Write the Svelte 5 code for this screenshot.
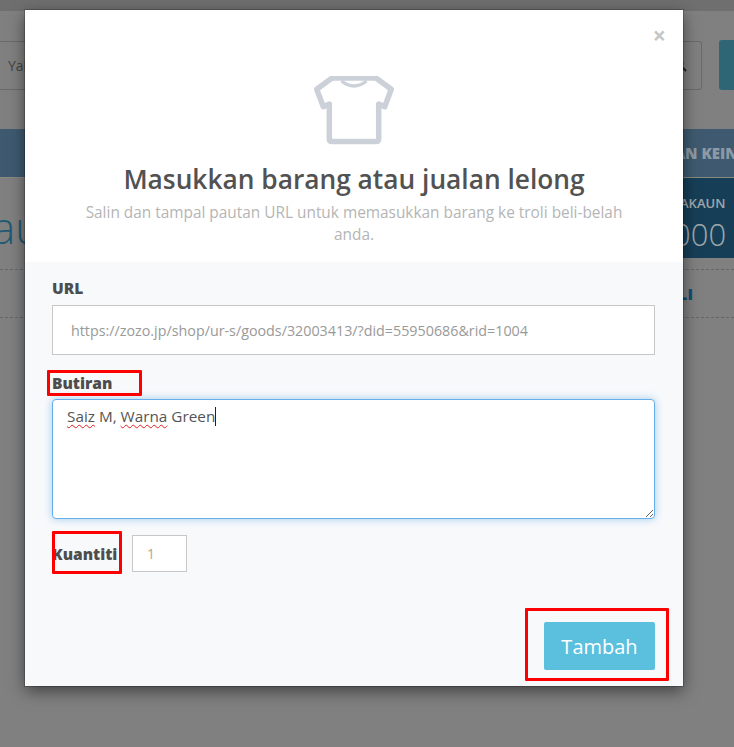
<script>
  let url = "https://zozo.jp/shop/ur-s/goods/32003413/?did=55950686&rid=1004";
  let qty = 1;
</script>

<div class="page">
  <div class="topbar"></div>
  <div class="search-row">
    <div class="search"><span class="search-text">Yahoo</span>
      <svg class="search-icon" width="14" height="14" viewBox="0 0 14 14"><circle cx="5.5" cy="5.5" r="4" fill="none" stroke="#222" stroke-width="2"/><path d="M8.5 8.5 13 13" stroke="#222" stroke-width="2"/></svg>
    </div>
    <div class="search-btn"></div>
  </div>
  <div class="band"><span class="band-text">JUALAN KEINGINAN</span></div>
  <div class="summary">
    <span class="big-title">au</span>
    <div class="account">
      <span class="account-label">AKAUN</span>
      <span class="account-value">000</span>
    </div>
  </div>
  <div class="tabs"><span class="tab-text">BELI</span></div>
</div>

<div class="modal">
  <span class="close">×</span>
  <div class="head">
    <svg class="shirt" width="80" height="70" viewBox="0 0 80 70" fill="none" stroke="#ccd1d9" stroke-linejoin="round">
      <path d="M18 2 L62 2 L77.3 13.3 L70.7 30.7 L64.7 28 L64.7 63 Q64.7 65.5 62 65.5 L18 65.5 Q15.3 65.5 15.3 63 L15.3 28 L9.3 30.7 L2.7 13.3 Z" stroke-width="5.5"/>
      <path d="M27.5 5 Q40 15 52.5 5" stroke-width="3.5"/>
    </svg>
    <h2>Masukkan barang atau jualan lelong</h2>
    <p>Salin dan tampal pautan URL untuk memasukkan barang ke troli beli-belah anda.</p>
  </div>
  <div class="body">
    <label class="lbl" for="url">URL</label>
    <input id="url" class="url" type="text" value={url} readonly />
    <div class="lbl lbl-butiran">Butiran</div>
    <div class="area"><span class="typo">Saiz</span> M, <span class="typo">Warna</span> Green<span class="caret"></span></div>
    <div class="qty-row">
      <label class="lbl qty-lbl" for="qty">Kuantiti</label>
      <input id="qty" class="qty" type="text" value={qty} readonly />
    </div>
    <div class="actions">
      <button class="add">Tambah</button>
    </div>
  </div>
  <div class="mark mark-butiran"></div>
  <div class="mark mark-qty"></div>
  <div class="mark mark-add"></div>
</div>

<style>
  :global(body) {
    margin: 0;
    background: #808080;
    font-family: "Open Sans", sans-serif;
    overflow: hidden;
  }
  .page {
    height: 747px;
    overflow: hidden;
    background: #808080;
    color: #555;
  }
  .topbar {
    height: 11px;
    background: #6f6f6f;
  }
  .search-row {
    display: flex;
    align-items: center;
    gap: 17px;
    padding-top: 29px;
    height: 50px;
    width: 780px;
  }
  .search {
    flex: none;
    width: 702px;
    height: 49px;
    box-sizing: border-box;
    border: 1px solid #6a6a6a;
    border-left: 0;
    border-radius: 0 3px 3px 0;
    display: flex;
    align-items: center;
    justify-content: space-between;
    padding: 0 14px 0 8px;
    font-size: 14px;
    color: #444;
  }
  .search-btn {
    flex: none;
    width: 40px;
    height: 50px;
    border-radius: 3px;
    background: #2f6675;
  }
  .band {
    margin-top: 39px;
    height: 49px;
    background: #3f5a70;
    display: flex;
    align-items: center;
    justify-content: flex-end;
    white-space: nowrap;
    overflow: hidden;
    border-bottom: 1px solid #8a8a80;
    box-sizing: border-box;
  }
  .band-text {
    font-size: 15px;
    font-weight: 800;
    color: #8d9aa6;
    margin-right: -56px;
  }
  .summary {
    height: 80px;
    display: flex;
    justify-content: space-between;
  }
  .big-title {
    font-size: 44px;
    font-weight: 300;
    color: #1f5a73;
    white-space: nowrap;
    margin-left: -8px;
    margin-top: 19px;
  }
  .account {
    width: 51px;
    background: #163f57;
    display: flex;
    flex-direction: column;
    overflow: hidden;
    white-space: nowrap;
    box-sizing: border-box;
    color: #a0a8ac;
  }
  .account-label {
    font-size: 13px;
    font-weight: 600;
    margin-top: 16px;
    margin-left: -3px;
  }
  .account-value {
    font-size: 31px;
    font-weight: 300;
    line-height: 36px;
    margin-top: 4px;
    margin-left: -10px;
  }
  .tabs {
    margin-top: 11px;
    height: 47px;
    border-top: 1px dashed #666;
    border-bottom: 1px dashed #666;
    display: flex;
    align-items: center;
    justify-content: flex-end;
    overflow: hidden;
  }
  .tab-text {
    font-size: 16px;
    font-weight: 800;
    color: #0d4f74;
    margin-right: 41px;
  }

  .modal {
    position: absolute;
    left: 25px;
    top: 10px;
    width: 658px;
    height: 676px;
    background: #fff;
    box-shadow: 0 0 0 1px rgba(0, 0, 0, 0.2), 0 5px 15px rgba(0, 0, 0, 0.5);
  }
  .close {
    position: absolute;
    right: 17px;
    top: 12px;
    font-size: 23px;
    line-height: 27px;
    font-weight: 700;
    color: #c6c6c6;
  }
  .head {
    height: 252px;
    box-sizing: border-box;
    padding: 66px 50px 0;
    text-align: center;
  }
  .shirt {
    display: block;
    margin: 0 auto;
  }
  h2 {
    margin: 15px 0 0;
    font-size: 26.3px;
    line-height: 36px;
    font-weight: 600;
    color: #525252;
  }
  p {
    margin: 5px 0 0;
    font-size: 15.4px;
    line-height: 22px;
    color: #b5b5b5;
  }
  .body {
    height: 424px;
    box-sizing: border-box;
    background: #f8f9fb;
    padding: 16px 28px 0 27px;
  }
  .lbl {
    display: block;
    font-size: 15.5px;
    line-height: 20px;
    font-weight: 800;
    color: #4d4d4d;
  }
  .url {
    display: block;
    width: 100%;
    height: 50px;
    margin-top: 7px;
    box-sizing: border-box;
    border: 1px solid #c8c8c8;
    background: #fff;
    padding: 0 18px;
    font: 14.3px "Open Sans", sans-serif;
    color: #999;
    outline: none;
  }
  .lbl-butiran {
    margin-top: 18px;
  }
  .area {
    height: 120px;
    margin-top: 6px;
    box-sizing: border-box;
    border: 1px solid #66afe9;
    border-radius: 4px;
    background: #fff;
    box-shadow: 0 0 8px rgba(102, 175, 233, 0.6);
    padding: 6px 14px;
    font-size: 15.3px;
    line-height: 20px;
    color: #555;
    overflow: auto;
    resize: both;
  }
  .typo {
    text-decoration: underline wavy #e02020 1px;
    text-underline-offset: 2px;
  }
  .caret {
    display: inline-block;
    width: 1px;
    height: 19px;
    background: #222;
    vertical-align: -4px;
  }
  .qty-row {
    display: flex;
    align-items: center;
    gap: 14px;
    margin-top: 16px;
  }
  .qty-lbl {
    width: 66px;
    white-space: nowrap;
  }
  .qty {
    width: 55px;
    height: 37px;
    box-sizing: border-box;
    border: 1px solid #c8c8c8;
    background: #fff;
    padding: 0 14px;
    font: 14px "Open Sans", sans-serif;
    color: #b5a58c;
    outline: none;
  }
  .actions {
    display: flex;
    justify-content: flex-end;
    margin-top: 50px;
  }
  .add {
    width: 111px;
    height: 48px;
    border: 0;
    border-radius: 2px;
    background: #5bc0de;
    color: #fff;
    font: 20px "Open Sans", sans-serif;
    padding: 0;
  }
  .mark {
    position: absolute;
    box-sizing: border-box;
    border: 3px solid #f00;
    border-radius: 1px;
    pointer-events: none;
  }
  .mark-butiran {
    left: 22px;
    top: 360px;
    width: 95px;
    height: 26px;
  }
  .mark-qty {
    left: 27px;
    top: 521px;
    width: 70px;
    height: 43px;
  }
  .mark-add {
    left: 500px;
    top: 598px;
    width: 144px;
    height: 73px;
  }
</style>
